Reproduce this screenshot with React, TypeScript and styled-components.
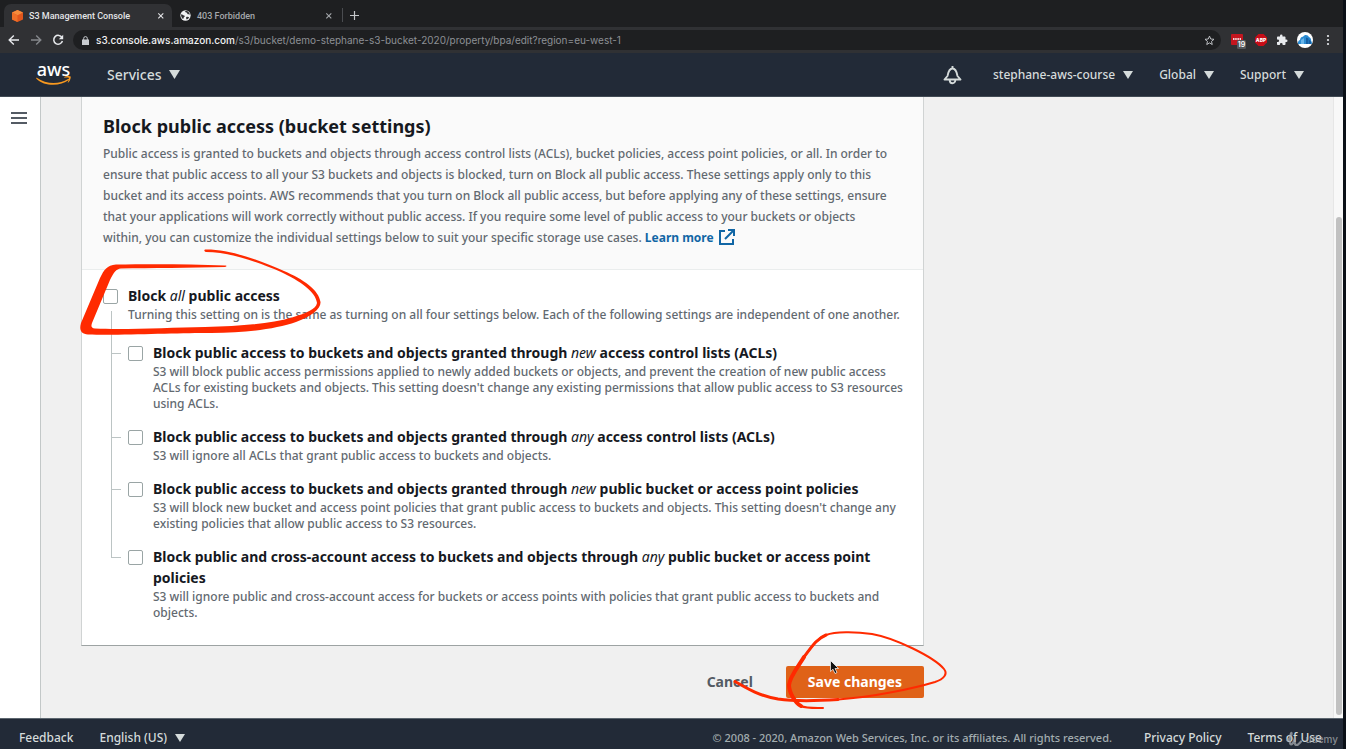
import React from "react";
import styled, { createGlobalStyle } from "styled-components";

const ember = `"Noto Sans", "Open Sans", sans-serif`;
const system = `Inter, Roboto, sans-serif`;

const GlobalStyle = createGlobalStyle`
  * { box-sizing: border-box; }
  body { margin: 0; background: #0b0f14; font-family: ${ember}; font-weight: 500; color: #16191f; }
  h1, p { margin: 0; }
  button { font-family: inherit; font-weight: inherit; border: 0; background: none; padding: 0; cursor: pointer; }
  a { text-decoration: none; }
`;

const Page = styled.div`
  position: relative;
  display: flex;
  flex-direction: column;
  min-height: 100vh;
  border-right: 3px solid #0b1017;
  overflow: hidden;
`;

/* Browser window */
const TabStrip = styled.div`
  display: flex;
  align-items: flex-end;
  height: 27px;
  padding-left: 4px;
  background: #1e1f21;
  font-family: Roboto, sans-serif;
`;

const Tab = styled.div<{ $active?: boolean }>`
  display: flex;
  align-items: center;
  gap: 6px;
  width: 168px;
  height: 23px;
  padding: 0 7px 0 8px;
  border-radius: 7px 7px 0 0;
  background: ${(p) => (p.$active ? "#303134" : "transparent")};
  color: ${(p) => (p.$active ? "#e4e5e7" : "#a5a8ac")};
  font-size: 9px;
  line-height: 14px;
`;

const TabTitle = styled.span`
  flex: 1;
  white-space: nowrap;
`;

const ChromeButton = styled.button`
  display: flex;
  align-items: center;
  justify-content: center;
  flex: none;
  color: inherit;
`;

const NewTab = styled(ChromeButton)`
  width: 24px;
  height: 14px;
  margin: 0 0 5px 2px;
  border-left: 1px solid #4a4c50;
  color: #c4c6c9;
`;

const Toolbar = styled.div`
  display: flex;
  align-items: center;
  height: 26px;
  padding: 0 8px 0 7px;
  gap: 8px;
  background: #303134;
  color: #e8eaed;
  font-family: ${system};
  font-weight: 400;
`;

const AddressBar = styled.div`
  display: flex;
  align-items: center;
  flex: 1;
  height: 20px;
  padding: 0 6px 0 9px;
  gap: 7px;
  border-radius: 10px;
  background: #1e1f21;
  color: #8d9095;
  font-size: 10px;
  line-height: 14px;
`;

const Url = styled.span`
  flex: 1;
  white-space: nowrap;
  b { font-weight: 500; color: #f1f2f3; }
`;

const Extensions = styled.div`
  display: flex;
  align-items: center;
  gap: 8px;
`;

/* Console header */
const ConsoleNav = styled.header`
  display: flex;
  align-items: center;
  height: 44px;
  padding: 0 39px 0 36px;
  background: #222a37;
  border-bottom: 1px solid #414a54;
`;

const NavGroup = styled.nav`
  display: flex;
  align-items: center;
  gap: 26px;
  margin-left: auto;
`;

const NavButton = styled.button<{ $large?: boolean }>`
  display: flex;
  align-items: center;
  gap: ${(p) => (p.$large ? 7 : 8)}px;
  color: #d5dbdb;
  font-size: ${(p) => (p.$large ? 14 : 12)}px;
  line-height: 20px;
`;

const BellButton = styled(NavButton)`
  margin-right: 5px;
`;

const Logo = styled.a`
  display: flex;
  margin-right: 35px;
`;

/* Body */
const Workspace = styled.div`
  display: flex;
  flex: 1;
  background: #f0f0f0;
`;

const SideRail = styled.aside`
  width: 41px;
  flex: none;
  padding: 14px 0 0 11px;
  background: #fff;
  border-right: 1px solid #c3c8c8;
  color: #545b64;
`;

const Main = styled.main`
  flex: 1;
  padding: 0 40px 20px;
`;

const Column = styled.form`
  max-width: 843px;
`;

const Card = styled.section`
  background: #fff;
  border: 1px solid #d0d3d3;
  border-top: 0;
  border-bottom-color: #9da3a3;
`;

const CardHeader = styled.div`
  padding: 19px 21px 21px;
  background: #fafafa;
  border-bottom: 1px solid #eaeded;
  color: #626970;
  font-size: 12px;
  line-height: 21px;
  white-space: nowrap;
`;

const Title = styled.h1`
  margin-bottom: 6px;
  color: #16191f;
  font-size: 18px;
  font-weight: 700;
  line-height: 21px;
`;

const LearnMore = styled.a`
  color: #1166a5;
  font-weight: 700;
  svg { margin-left: 2px; vertical-align: -3px; }
`;

const Settings = styled.div`
  padding: 15px 21px 24px;
`;

const Option = styled.div`
  position: relative;
  display: flex;
  gap: 10px;
`;

const Children = styled.div`
  display: flex;
  flex-direction: column;
  gap: 14px;
  margin-top: 19px;
  padding-left: 25px;
`;

const ChildOption = styled(Option)`
  &::before {
    content: "";
    position: absolute;
    left: -17px;
    top: -16px;
    bottom: 0;
    border-left: 1px solid #bcc4c4;
  }
  &::after {
    content: "";
    position: absolute;
    left: -17px;
    top: 11px;
    width: 10px;
    border-top: 1px solid #bcc4c4;
  }
  &:first-child::before { top: -31px; }
  &:last-child::before { bottom: auto; height: 27px; }
`;

const Check = styled.input`
  appearance: none;
  flex: none;
  width: 15px;
  height: 15px;
  margin: 4px 0 0;
  background: #fff;
  border: 1px solid #9aa5a5;
  border-radius: 2px;
`;

const OptionLabel = styled.label`
  display: block;
  color: #16191f;
  font-size: 14px;
  font-weight: 700;
  line-height: 21px;
  white-space: nowrap;
  em { font-weight: 400; }
`;

const Description = styled.p`
  padding-top: 1px;
  color: #626970;
  font-size: 12px;
  line-height: 16px;
  white-space: nowrap;
`;

const Actions = styled.div`
  display: flex;
  justify-content: flex-end;
  gap: 33px;
  margin-top: 20px;
`;

const Action = styled.button<{ $primary?: boolean }>`
  height: 32px;
  padding: ${(p) => (p.$primary ? "0 22px" : "0")};
  border-radius: 2px;
  background: ${(p) => (p.$primary ? "#df6218" : "transparent")};
  color: ${(p) => (p.$primary ? "#fff" : "#545b64")};
  font-size: 14px;
  font-weight: 700;
  line-height: 20px;
`;

const ScrollTrack = styled.div`
  width: 10px;
  flex: none;
  padding: 120px 1px 3px 2px;
  background: #f8f8f8;
  border-left: 1px solid #e6e6e6;
`;

const ScrollThumb = styled.div`
  height: 100%;
  border-radius: 4px;
  background: #c1c1c1;
`;

const Footer = styled.footer`
  display: flex;
  align-items: center;
  gap: 26px;
  height: 31px;
  padding: 8px 21px 0 19px;
  background: #222a37;
  border-top: 1px solid #5c666f;
  font-size: 12px;
  line-height: 20px;
`;

const FooterLink = styled.a`
  color: #d5dbdb;
`;

const Copyright = styled.span`
  margin: 0 6px 0 auto;
  color: #a3adb0;
  font-size: 11px;
`;

const Ink = styled.svg`
  position: absolute;
  left: 0;
  top: 0;
  pointer-events: none;
`;

const Watermark = styled.div`
  position: absolute;
  right: 5px;
  bottom: 2px;
  display: flex;
  align-items: center;
  gap: 2px;
  color: #a5a9ae;
  font-family: ${system};
  font-size: 10px;
  line-height: 14px;
  opacity: 0.75;
`;

const Caret = ({ size = 10 }: { size?: number }) => (
  <svg width={size} height={size - 2} viewBox="0 0 10 8" aria-hidden="true">
    <path d="M0 0h10L5 8z" fill="#d5dbdb" />
  </svg>
);

const Close = () => (
  <svg width="8" height="8" viewBox="0 0 8 8" aria-hidden="true">
    <path d="M1.3 1.3l5 5m0-5l-5 5" stroke="currentColor" strokeWidth="1.1" />
  </svg>
);

const options: { id: string; label: React.ReactNode; text: string[] }[] = [
  {
    id: "new-acl",
    label: <>Block public access to buckets and objects granted through <em>new</em> access control lists (ACLs)</>,
    text: [
      "S3 will block public access permissions applied to newly added buckets or objects, and prevent the creation of new public access",
      "ACLs for existing buckets and objects. This setting doesn't change any existing permissions that allow public access to S3 resources",
      "using ACLs.",
    ],
  },
  {
    id: "any-acl",
    label: <>Block public access to buckets and objects granted through <em>any</em> access control lists (ACLs)</>,
    text: ["S3 will ignore all ACLs that grant public access to buckets and objects."],
  },
  {
    id: "new-policy",
    label: <>Block public access to buckets and objects granted through <em>new</em> public bucket or access point policies</>,
    text: [
      "S3 will block new bucket and access point policies that grant public access to buckets and objects. This setting doesn't change any",
      "existing policies that allow public access to S3 resources.",
    ],
  },
  {
    id: "any-policy",
    label: <>Block public and cross-account access to buckets and objects through <em>any</em> public bucket or access point<br />policies</>,
    text: [
      "S3 will ignore public and cross-account access for buckets or access points with policies that grant public access to buckets and",
      "objects.",
    ],
  },
];

const Lines = ({ text }: { text: string[] }) => (
  <>
    {text.map((line, i) => (
      <React.Fragment key={line}>
        {i > 0 && <br />}
        {line}
      </React.Fragment>
    ))}
  </>
);

export default function App() {
  return (
    <Page>
      <GlobalStyle />
      <TabStrip>
        <Tab $active>
          <svg width="11" height="12" viewBox="0 0 11 12" aria-hidden="true">
            <path d="M5.5 0L11 2.6v6.8L5.5 12 0 9.4V2.6z" fill="#e0561d" />
            <path d="M5.5 0L11 2.6 5.5 5.2 0 2.6z" fill="#f58b3c" />
            <path d="M0 2.6l5.5 2.6V12L0 9.4z" fill="#ee6f28" />
          </svg>
          <TabTitle>S3 Management Console</TabTitle>
          <ChromeButton aria-label="Close tab"><Close /></ChromeButton>
        </Tab>
        <Tab>
          <svg width="11" height="11" viewBox="0 0 12 12" aria-hidden="true">
            <circle cx="6" cy="6" r="5.6" fill="#f1f3f4" />
            <path d="M1.2 4.6c1.4.2 2 .9 3.300 1.300 1 .4.9 1.200 0 1.700-.6.5-.5 1.500-1.100 2.200C1.800 8.800.9 6.900 1.200 4.600zM5 1.300c1.300.2.9 1.400 2 1.500 1 .2.6 1.400 1.500 1.800.9.4 1.600.1 2.300.7-.1-2-1.700-4.200-4.200-4.400zM7 7.500c1-.6 2.400 0 3 .400-.5 1.200-1.400 2-2.600 2.500-.6-.8-1.200-2.200-.4-2.900z" fill="#303134" />
          </svg>
          <TabTitle>403 Forbidden</TabTitle>
          <ChromeButton aria-label="Close tab"><Close /></ChromeButton>
        </Tab>
        <NewTab aria-label="New tab">
          <svg width="9" height="9" viewBox="0 0 9 9" aria-hidden="true">
            <path d="M4.500 0v9M0 4.500h9" stroke="currentColor" strokeWidth="1.200" />
          </svg>
        </NewTab>
      </TabStrip>

      <Toolbar>
        <ChromeButton aria-label="Back">
          <svg width="14" height="12" viewBox="0 0 14 12" fill="none" stroke="#e8eaed" strokeWidth="1.400"><path d="M12 6H2.500M6.800 1.500L2.200 6l4.600 4.500" /></svg>
        </ChromeButton>
        <ChromeButton aria-label="Forward">
          <svg width="14" height="12" viewBox="0 0 14 12" fill="none" stroke="#85888c" strokeWidth="1.400"><path d="M2 6h9.500M7.200 1.500L11.800 6l-4.600 4.500" /></svg>
        </ChromeButton>
        <ChromeButton aria-label="Reload">
          <svg width="14" height="12" viewBox="0 0 14 12" fill="none" stroke="#e8eaed" strokeWidth="1.500"><path d="M11 3.600A4.400 4.400 0 1 0 11.400 7" /><path d="M12.200.8v4.400H7.800z" fill="#e8eaed" stroke="none" /></svg>
        </ChromeButton>
        <AddressBar>
          <svg width="7" height="9" viewBox="0 0 7 9" aria-hidden="true">
            <path d="M0 3.500h7V9H0z" fill="#c9ccd0" />
            <path d="M1.700 4V2.400a1.800 1.800 0 0 1 3.600 0V4" fill="none" stroke="#c9ccd0" />
          </svg>
          <Url><b>s3.console.aws.amazon.com</b>/s3/bucket/demo-stephane-s3-bucket-2020/property/bpa/edit?region=eu-west-1</Url>
          <ChromeButton aria-label="Bookmark this page">
            <svg width="11" height="11" viewBox="0 0 12 12" fill="none" stroke="#c9ccd0"><path d="M6 1.200l1.400 3.200 3.500.3-2.700 2.300.8 3.400L6 8.600l-3 1.800.8-3.400L1.100 4.700l3.500-.3z" /></svg>
          </ChromeButton>
        </AddressBar>
        <Extensions>
          <ChromeButton aria-label="Extension, 19">
            <svg width="18" height="18" viewBox="0 0 18 18">
              <rect x="2" y="3" width="12" height="11" rx="1" fill="#c4161f" />
              <path d="M4 8h8" stroke="#f3d6d8" strokeWidth="1.800" strokeDasharray="1.500 .7" />
              <rect x="8" y="9" width="9" height="9" rx="1.500" fill="#55585c" />
              <text x="12.500" y="16" textAnchor="middle" fontSize="7" fontWeight="600" fill="#fff">19</text>
            </svg>
          </ChromeButton>
          <ChromeButton aria-label="ABP">
            <svg width="12" height="12" viewBox="0 0 12 12">
              <path d="M3.500 0h5L12 3.500v5L8.500 12h-5L0 8.500v-5z" fill="#c70d17" />
              <text x="6" y="8" textAnchor="middle" fontSize="5" fontWeight="800" fill="#fff">ABP</text>
            </svg>
          </ChromeButton>
          <ChromeButton aria-label="Extensions">
            <svg width="14" height="12" viewBox="0 0 24 24"><path d="M20.500 11H19V7c0-1.100-.9-2-2-2h-4V3.500a2.500 2.500 0 0 0-5 0V5H4c-1.100 0-2 .9-2 2v3.800h1.500a2.700 2.700 0 0 1 0 5.400H2V20c0 1.100.9 2 2 2h3.800v-1.500a2.700 2.700 0 0 1 5.400 0V22H17c1.100 0 2-.9 2-2v-4h1.500a2.500 2.500 0 0 0 0-5z" fill="#e8eaed" /></svg>
          </ChromeButton>
          <ChromeButton aria-label="Profile">
            <svg width="16" height="16" viewBox="0 0 16 16">
              <circle cx="8" cy="8" r="8" fill="#fff" />
              <path d="M1 12c-.5-2 .5-3.500 2-4 .2-2.200 1.400-3.500 3-3.300C7.500 2.300 11 2.600 11.800 5c1.600.6 2.700 2.200 2.400 4 .8.800 1 2 .6 3z" fill="#2a8bd2" />
              <path d="M9 5.500l2.500 1V12H9zM12 7.500l2 2V12h-2z" fill="#155fa5" />
              <path d="M4 8l3-2v6H4z" fill="#67b4ea" />
            </svg>
          </ChromeButton>
          <ChromeButton aria-label="Menu">
            <svg width="14" height="12" viewBox="0 0 14 12" fill="#e8eaed"><circle cx="7" cy="2" r="1.100" /><circle cx="7" cy="6" r="1.100" /><circle cx="7" cy="10" r="1.100" /></svg>
          </ChromeButton>
        </Extensions>
      </Toolbar>

      <ConsoleNav>
        <Logo href="#" aria-label="aws">
          <svg width="36" height="34" viewBox="0 0 36 34">
            <text x="17.500" y="18" textAnchor="middle" fontFamily="Noto Sans" fontWeight="500" fontSize="18" fill="#fff">aws</text>
            <g transform="translate(0 4)" fill="#f7981f">
              <path d="M.8 15.800c9 6.600 22.500 7 31.200 1.200.9-.5 1.500.3.800 1C24.500 24.500 8.500 24.800.4 16.700c-.5-.6-.1-1.200.4-.9z" />
              <path d="M28.300 15.100c2.100-1.500 5.700-1.200 6.300-.5.500.7-.3 4.200-2.300 6-.4.300-.7.100-.5-.4.600-1.200 1.500-3.700 1.100-4.200-.5-.6-3-.4-4.200-.3-.5 0-.7-.3-.4-.6z" />
            </g>
          </svg>
        </Logo>
        <NavButton $large>Services <Caret size={11} /></NavButton>
        <NavGroup>
          <BellButton aria-label="Notifications">
            <svg width="19" height="20" viewBox="0 0 19 20" fill="none" stroke="#d5dbdb" strokeWidth="1.900" strokeLinejoin="round">
              <path d="M9.500 1v2.500M1.500 14.500L4.500 11c.8-4.500 2.200-7.500 5-7.500s4.200 3 5 7.500l3 3.500z" />
              <path d="M6.700 15c0 4.300 5.600 4.300 5.600 0" />
            </svg>
          </BellButton>
          <NavButton>stephane-aws-course <Caret /></NavButton>
          <NavButton>Global <Caret /></NavButton>
          <NavButton>Support <Caret /></NavButton>
        </NavGroup>
      </ConsoleNav>

      <Workspace>
        <SideRail>
          <ChromeButton aria-label="Open navigation">
            <svg width="16" height="14" viewBox="0 0 16 14"><path d="M0 2h16M0 7h16M0 12h16" stroke="currentColor" strokeWidth="2" /></svg>
          </ChromeButton>
        </SideRail>
        <Main>
          <Column>
            <Card>
              <CardHeader>
                <Title>Block public access (bucket settings)</Title>
                <p>
                  <Lines
                    text={[
                      "Public access is granted to buckets and objects through access control lists (ACLs), bucket policies, access point policies, or all. In order to",
                      "ensure that public access to all your S3 buckets and objects is blocked, turn on Block all public access. These settings apply only to this",
                      "bucket and its access points. AWS recommends that you turn on Block all public access, but before applying any of these settings, ensure",
                      "that your applications will work correctly without public access. If you require some level of public access to your buckets or objects",
                      "within, you can customize the individual settings below to suit your specific storage use cases. ",
                    ]}
                  />
                  <LearnMore href="#">
                    Learn more{" "}
                    <svg width="16" height="16" viewBox="0 0 16 16" fill="none" stroke="currentColor" strokeWidth="2" aria-hidden="true">
                      <path d="M6 2H1v13h13v-5M9 1h6v6M15 1L6 10" />
                    </svg>
                  </LearnMore>
                </p>
              </CardHeader>
              <Settings>
                <Option>
                  <Check type="checkbox" id="all" />
                  <div>
                    <OptionLabel htmlFor="all">Block <em>all</em> public access</OptionLabel>
                    <Description>Turning this setting on is the same as turning on all four settings below. Each of the following settings are independent of one another.</Description>
                  </div>
                </Option>
                <Children>
                  {options.map((o) => (
                    <ChildOption key={o.id}>
                      <Check type="checkbox" id={o.id} />
                      <div>
                        <OptionLabel htmlFor={o.id}>{o.label}</OptionLabel>
                        <Description><Lines text={o.text} /></Description>
                      </div>
                    </ChildOption>
                  ))}
                </Children>
              </Settings>
            </Card>
            <Actions>
              <Action type="button">Cancel</Action>
              <Action type="button" $primary>Save changes</Action>
            </Actions>
          </Column>
        </Main>
        <ScrollTrack><ScrollThumb /></ScrollTrack>
      </Workspace>

      <Footer>
        <FooterLink href="#">Feedback</FooterLink>
        <NavButton>English (US) <Caret /></NavButton>
        <Copyright>© 2008 - 2020, Amazon Web Services, Inc. or its affiliates. All rights reserved.</Copyright>
        <FooterLink href="#">Privacy Policy</FooterLink>
        <FooterLink href="#">Terms of Use</FooterLink>
      </Footer>

      <Watermark>
        <svg width="17" height="16" viewBox="0 0 17 16" fill="none" stroke="currentColor" strokeWidth="2.200" strokeLinecap="round" aria-hidden="true">
          <path d="M1.500 9.500C4 8 6 3 5.500 2S3 8 4 12s4-1 5-5c-.5 4-.5 7 1.500 7s3-2 4.500-3.500" />
        </svg>
        udemy
      </Watermark>

      <Ink width="1346" height="749" viewBox="0 0 1346 749" aria-hidden="true">
        <g fill="#ff2a00">
          <path d="M225 265.500C190 264 150 264 116 264.500C107 265 104 270 100 278L81 323C79 330 81 334 88 334.500C120 335.500 175 333 205 333C245 333.500 275 329 296 322C312 316 321 309 320.500 302C319 290 303 279 284 271C262 261 230 249 205 249.500C204 250 204 251.500 206 252C230 252 260 263 281 272C300 281 316 292 317 303C316 309 307 313 292 317.500C270 324 240 326 205 327C170 327.500 125 330 95 328.500C91 328 91 326 92 323L110 280C114 272 116 269 121 268.500C150 268 190 268 225 267C227 266.500 227 265.500 225 265.500Z" />
        </g>
        <g fill="none" stroke="#ff2a00" strokeLinecap="round" strokeLinejoin="round">
          <path d="M735 681.500C748 689 760 696 778 699C792 701 815 701 838 699.500" strokeWidth="3" />
          <path d="M838 699.500C875 697 915 688 935 682C944 679 948 674 944 669C934 657 895 638 872 634C855 631.500 835 631.500 826 635C816 639 811 648 804 657" strokeWidth="2" />
          <path d="M804 657C798 667 790 676 789 685C789 692 795 703 801 706" strokeWidth="4" />
          <path d="M826 635C816 639 811 648 804 657" strokeWidth="3" />
          <path d="M801 706C806 708.500 815 708 823 708" strokeWidth="2" />
        </g>
        <path d="M830.500 660.500v11l2.500-2.300 2 4.300 2-1-2-4h3.500z" fill="#111" stroke="#fff" strokeWidth=".7" />
      </Ink>
    </Page>
  );
}
